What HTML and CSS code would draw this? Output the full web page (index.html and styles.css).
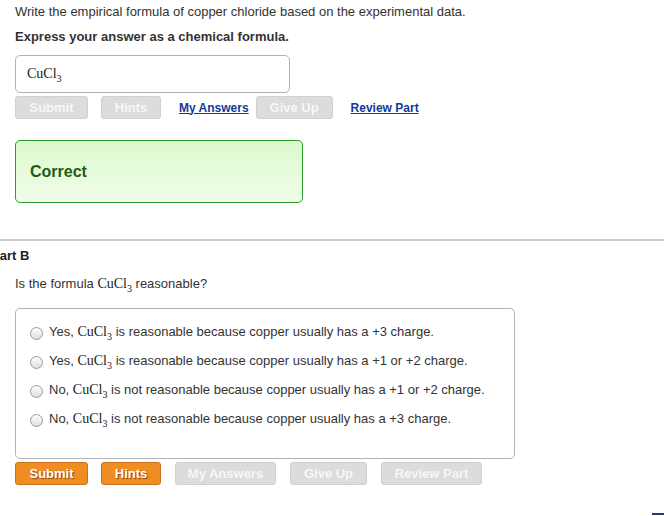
FILE: index.html
```html
<!DOCTYPE html>
<html lang="en">
<head>
    <meta charset="UTF-8">
    <title>Part A / Part B</title>
    <link rel="stylesheet" href="styles.css">
</head>
<body>
    <div class="part part-a">
        <p class="prompt">Write the empirical formula of copper chloride based on the experimental data.</p>
        <p class="instruction">Express your answer as a chemical formula.</p>
        <div class="answer-box"><span class="formula">CuCl<sub>3</sub></span></div>
        <div class="actions">
            <span class="btn disabled btn-submit">Submit</span>
            <span class="btn disabled btn-hints">Hints</span>
            <a href="#" class="link">My Answers</a>
            <span class="btn disabled btn-giveup">Give Up</span>
            <a href="#" class="link link-review">Review Part</a>
        </div>
        <div class="feedback">Correct</div>
    </div>

    <div class="part part-b">
        <h3 class="part-title">Part B</h3>
        <p class="prompt">Is the formula <span class="formula">CuCl<sub>3</sub></span> reasonable?</p>
        <div class="choices">
            <label class="choice"><span class="radio"></span>Yes, <span class="formula">CuCl<sub>3</sub></span> is reasonable because copper usually has a +3 charge.</label>
            <label class="choice"><span class="radio"></span>Yes, <span class="formula">CuCl<sub>3</sub></span> is reasonable because copper usually has a +1 or +2 charge.</label>
            <label class="choice"><span class="radio"></span>No, <span class="formula">CuCl<sub>3</sub></span> is not reasonable because copper usually has a +1 or +2 charge.</label>
            <label class="choice"><span class="radio"></span>No, <span class="formula">CuCl<sub>3</sub></span> is not reasonable because copper usually has a +3 charge.</label>
        </div>
        <div class="actions">
            <span class="btn active btn-submit">Submit</span>
            <span class="btn active btn-hints">Hints</span>
            <span class="btn disabled btn-wide">My Answers</span>
            <span class="btn disabled btn-giveup">Give Up</span>
            <span class="btn disabled btn-wide">Review Part</span>
        </div>
    </div>
    <div class="corner-mark"></div>
</body>
</html>
```

FILE: styles.css
```css
body {
    font-family: "Liberation Sans", Arial, sans-serif;
    font-size: 13px;
    color: #333;
    background: #fff;
    margin: 0;
    position: relative;
    height: 516px;
    overflow: hidden;
}
p {
    margin: 0;
}
.part {
    padding: 0 15px;
}
.part-a .prompt {
    padding-top: 4px;
    line-height: 16px;
}
.instruction {
    font-weight: bold;
    margin-top: 9px;
    line-height: 16px;
}
.formula {
    font-family: "Liberation Serif", "Times New Roman", serif;
    font-size: 14px;
    color: #222;
}
.formula sub {
    font-size: 10px;
    vertical-align: -4px;
    line-height: 0;
}
.answer-box {
    margin-top: 10px;
    width: 275px;
    height: 38px;
    box-sizing: border-box;
    border: 1px solid #b3b3b3;
    border-radius: 5px;
    display: flex;
    align-items: center;
    padding-left: 11px;
}
.actions {
    display: flex;
    align-items: center;
    margin-top: 3px;
    height: 23px;
}
.btn {
    box-sizing: border-box;
    height: 23px;
    line-height: 21px;
    border-radius: 3px;
    font-weight: bold;
    font-size: 13px;
    color: #fff;
    text-align: center;
    border: 1px solid #ccc;
}
.btn.disabled {
    background: #dcdcdc;
    border-color: #d0d0d0;
    color: #f7f7f7;
}
.btn.active {
    background: #ef8c22;
    border-color: #c9721a;
    text-shadow: 1px 1px 1px #8a4a0c;
}
.btn-submit {
    width: 73px;
}
.btn-hints {
    width: 60px;
    margin-left: 13px;
}
.btn-giveup {
    width: 77px;
}
.btn-wide {
    width: 101px;
}
.link {
    color: #13399b;
    font-weight: bold;
    font-size: 12px;
    text-decoration: underline;
}
.part-a .link {
    margin: 0 7px 0 18px;
}
.part-a .link-review {
    margin-left: 18px;
}
.part-b .btn-wide {
    margin-right: 14px;
}
.part-b .btn-hints {
    margin-right: 14px;
}
.part-b .btn-giveup {
    margin-right: 14px;
}
.feedback {
    margin-top: 21px;
    width: 288px;
    height: 63px;
    box-sizing: border-box;
    border: 1px solid #2aa02a;
    border-radius: 5px;
    background: linear-gradient(#dcf9cc, #f0fdea);
    color: #1b5e12;
    font-weight: bold;
    font-size: 16px;
    display: flex;
    align-items: center;
    padding-left: 14px;
}
.part-b {
    margin-top: 36px;
    border-top: 2px solid #cccccc;
}
.part-title {
    margin: 7px 0 0 -24px;
    font-size: 13px;
    font-weight: bold;
    color: #222;
    line-height: 16px;
}
.part-b .prompt {
    margin-top: 11px;
    line-height: 18px;
}
.choices {
    margin-top: 15px;
    width: 500px;
    height: 151px;
    box-sizing: border-box;
    border: 1px solid #b3b3b3;
    border-radius: 5px;
    padding: 8px 0 0 14px;
}
.choice {
    display: flex;
    align-items: center;
    height: 29px;
    white-space: pre;
}
.radio {
    width: 13px;
    height: 13px;
    border-radius: 50%;
    border: 1px solid #9a9a9a;
    background: linear-gradient(#fdfdfd, #dedede);
    box-sizing: border-box;
    margin: 3px 6px 0 0;
    flex-shrink: 0;
}
.part-b .actions {
    margin-top: 3px;
}
.corner-mark {
    position: absolute;
    right: 0;
    bottom: 1px;
    width: 12px;
    height: 2px;
    background: #1d3f73;
}
```
